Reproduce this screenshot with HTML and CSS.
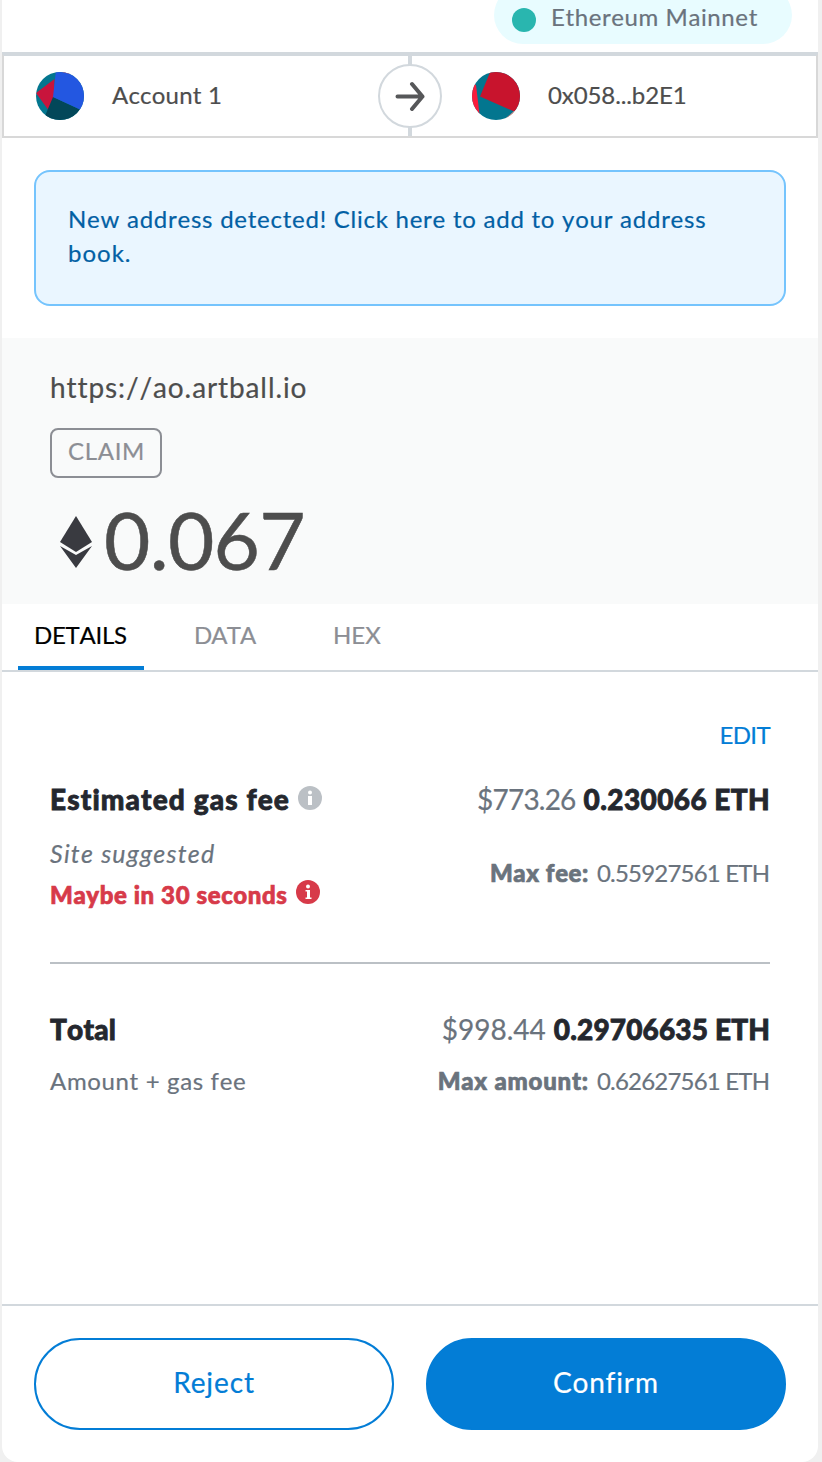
FILE: index.html
```html
<!DOCTYPE html>
<html lang="en">
<head>
<meta charset="utf-8">
<title>Confirm transaction</title>
<link rel="stylesheet" href="styles.css">
</head>
<body>
<main class="panel">
  <header class="header">
    <div class="network"><span class="network-dot"></span><span class="network-name">Ethereum Mainnet</span></div>
  </header>
  <section class="parties">
    <div class="party sender">
      <svg class="avatar" viewBox="0 0 48 48"><defs><clipPath id="disc"><circle cx="24" cy="24" r="24"/></clipPath></defs><g clip-path="url(#disc)"><path fill="#03768f" d="M0 0h48v48H0z"/><path fill="#c8143c" d="M0 21 18.500 7 18 25 12 37.500z"/><path fill="#024759" d="M17 25 44 37.500 38 48H0L9 44z"/><path fill="#2357e1" d="M20-2h30v43L44 37.500 17 25z"/><path fill="#e03850" d="M26 0h8v2z"/></g></svg>
      <span class="party-name sender-name">Account 1</span>
    </div>
    <div class="divider">
      <div class="arrow"><svg width="30" height="30" viewBox="0 0 30 30"><path d="M2.500 15.500h25M17 3l10.500 12.500L17 28" fill="none" stroke="#565759" stroke-width="4" stroke-linecap="round" stroke-linejoin="round"/></svg></div>
    </div>
    <div class="party recipient">
      <svg class="avatar" viewBox="0 0 48 48"><g clip-path="url(#disc)"><path fill="#03768f" d="M0 0h48v48H0z"/><path fill="#fa1c3c" d="M0 10 4 13 7.500 42H0z"/><path fill="#c8142d" d="M19-2h31v44L41 39 8 24.500z"/><path fill="#f98078" d="M32 48 42 39l4 9z"/></g></svg>
      <span class="party-name recipient-name">0x058...b2E1</span>
    </div>
  </section>
  <div class="alert"><span class="alert-text">New address detected! Click here to add to your address</span><br><span class="alert-end">book.</span></div>
  <section class="summary">
    <div class="origin">https://ao.artball.io</div>
    <div class="action">CLAIM</div>
    <div class="amount">
      <svg class="eth" viewBox="0 0 32 52"><path fill="#393a40" d="M16 0 32 26 16 36 0 26z"/><path fill="#393a40" d="M0 30l16 9 16-9L16 52z"/></svg>
      <span class="amount-value">0.067</span>
    </div>
  </section>
  <nav class="tabs">
    <div class="tab tab-active">DETAILS</div>
    <div class="tab tab-data">DATA</div>
    <div class="tab tab-hex">HEX</div>
  </nav>
  <section class="details">
    <div class="edit">EDIT</div>
    <div class="line fee-line">
      <div class="line-title"><span class="fee-title">Estimated gas fee</span><svg class="info info-gray" viewBox="0 0 24 24"><circle cx="12" cy="12" r="12" fill="#bbc0c5"/><circle cx="12" cy="6.500" r="2" fill="#fff"/><path fill="#fff" d="M10 10h4v9h-4z"/></svg></div>
      <div class="line-values"><span class="fiat fee-fiat">$773.26</span><b class="crypto fee-crypto">0.230066 ETH</b></div>
    </div>
    <div class="subline fee-sub">
      <div>
        <div class="suggested">Site suggested</div>
        <div class="timing"><span class="timing-text">Maybe in 30 seconds</span><svg class="info info-red" viewBox="0 0 24 24"><circle cx="12" cy="12" r="12" fill="#d73a49"/><circle cx="12" cy="6.500" r="2" fill="#fff"/><path fill="#fff" d="M9.500 10H14v7.500h1.500v1.500h-6v-1.500H11v-6H9.500z"/></svg></div>
      </div>
      <div class="max max-fee"><b class="max-fee-label">Max fee:</b><span class="max-value">0.55927561 ETH</span></div>
    </div>
    <div class="rule"></div>
    <div class="line total-line">
      <div class="line-title"><span class="total-title">Total</span></div>
      <div class="line-values"><span class="fiat total-fiat">$998.44</span><b class="crypto total-crypto">0.29706635 ETH</b></div>
    </div>
    <div class="subline total-sub">
      <div class="total-note">Amount + gas fee</div>
      <div class="max"><b class="max-amount-label">Max amount:</b><span class="max-value">0.62627561 ETH</span></div>
    </div>
  </section>
  <footer class="footer">
    <button class="button reject">Reject</button>
    <button class="button confirm">Confirm</button>
  </footer>
</main>
</body>
</html>
```
FILE: styles.css
```css
* { box-sizing: border-box; }
body {
  margin: 0;
  background: #f0f0f0;
  font-family: Lato, "Open Sans", sans-serif;
  font-size: 24px;
  line-height: 34px;
  color: #4d4d4d;
  white-space: nowrap;
  font-kerning: none;
  font-variant-ligatures: none;
  -webkit-text-stroke: 0.2px currentColor;
}
svg { display: block; flex: none; }
.panel {
  display: flex;
  flex-direction: column;
  width: 816px;
  height: 1462px;
  margin-left: 2px;
  background: #fff;
  border-radius: 0 0 16px 16px;
  overflow: hidden;
}
.header {
  display: flex;
  justify-content: flex-end;
  height: 54px;
  padding-right: 26px;
  border-bottom: 2px solid #d2d8dd;
}
.network {
  display: flex;
  align-items: center;
  width: 298px;
  height: 58px;
  margin-top: -14px;
  padding: 10px 0 0 18px;
  border-radius: 29px;
  background: #e8fcff;
  color: #6a737d;
}
.network-dot { width: 24px; height: 24px; margin-right: 15px; border-radius: 50%; background: #29b6af; }
.network-name { margin-top: -6px; letter-spacing: 0.6px; }
.parties {
  display: flex;
  height: 84px;
  border: 2px solid #d8d8d8;
  border-top-color: #d2d8dd;
}
.party { display: flex; align-items: center; }
.party-name { margin-top: -2px; }
.sender-name { letter-spacing: 0.2px; }
.recipient-name { letter-spacing: -0.1px; }
.sender { width: 374px; padding-left: 32px; }
.recipient { padding-left: 30px; }
.avatar { width: 48px; height: 48px; margin-right: 28px; }
.divider {
  display: flex;
  align-items: center;
  justify-content: center;
  width: 64px;
  background: linear-gradient(#d2d8dd, #d2d8dd) center / 4px 100% no-repeat;
}
.arrow {
  display: flex;
  align-items: center;
  justify-content: center;
  width: 64px;
  height: 64px;
  border: 2px solid #d2d8dd;
  border-radius: 50%;
  background: #fff;
}
.alert {
  height: 136px;
  margin: 32px 32px;
  padding: 30px 32px;
  border: 2px solid #75c4fd;
  border-radius: 16px;
  background: #eaf6ff;
  color: #0260a4;
}
.alert-text { letter-spacing: 0.75px; }
.alert-end { letter-spacing: 1px; }
.summary { height: 266px; padding: 31px 48px; background: #f9fafa; }
.origin { height: 36px; font-size: 28px; line-height: 36px; letter-spacing: 0.9px; }
.action {
  width: 112px;
  height: 50px;
  margin-top: 23px;
  padding-left: 16px;
  line-height: 42px;
  letter-spacing: 0.7px;
  border: 2px solid #8c8e94;
  border-radius: 8px;
  color: #8c8e94;
}
.amount { display: flex; align-items: center; height: 96px; margin-top: 14px; padding-left: 10px; }
.eth { width: 32px; height: 52px; margin: 4px 12px 0 0; }
.amount-value { font-size: 80px; line-height: 96px; margin-top: -2px; letter-spacing: -0.7px; -webkit-text-stroke-width: 0.5px; }
.tabs { display: flex; height: 68px; padding-left: 16px; border-bottom: 2px solid #d2d8dd; color: #8c8e94; }
.tab { height: 66px; padding: 14px 16px 0; }
.tab-active { width: 126px; border-bottom: 4px solid #037dd6; color: #000; letter-spacing: -0.25px; }
.tab-data { width: 96px; margin-left: 34px; letter-spacing: -0.9px; }
.tab-hex { margin-left: 43px; }
.details { flex: 1; padding: 46px 48px 0; color: #6a737d; }
.edit { text-align: right; color: #037dd6; letter-spacing: -0.6px; }
.line, .subline { display: flex; justify-content: space-between; }
.line { font-size: 28px; line-height: 36px; color: #24292e; }
.fee-line { margin-top: 29px; }
.line-title { display: flex; font-weight: 900; color: #24272e; -webkit-text-stroke-width: 0.8px; }
.fee-title { letter-spacing: 1.12px; }
.total-title { letter-spacing: 0.2px; }
.line-values { display: flex; gap: 8px; }
.fiat { color: #6a737d; }
.fee-fiat { letter-spacing: -0.8px; }
.crypto { font-weight: 900; color: #24272e; -webkit-text-stroke-width: 0.8px; }
.fee-crypto { letter-spacing: 0.4px; }
.total-crypto { letter-spacing: 0.15px; }
.info { width: 24px; height: 24px; }
.info-gray { margin: 5px 0 0 8px; }
.info-red { margin: 2px 0 0 8px; }
.fee-sub { margin-top: 19px; height: 126px; }
.suggested { font-size: 25px; font-style: italic; letter-spacing: 1.2px; }
.timing { display: flex; margin-top: 8px; font-weight: 900; color: #d73a49; letter-spacing: 0.6px; -webkit-text-stroke-width: 0.7px; }
.max { display: flex; gap: 8px; }
.max b { font-weight: 900; -webkit-text-stroke-width: 0.7px; }
.max-fee-label { letter-spacing: 0.6px; }
.max-amount-label { letter-spacing: 0.8px; }
.max-value { margin-right: 0.8px; letter-spacing: -0.8px; }
.max-fee { margin-top: 20px; }
.rule { height: 2px; background: #bbc0c5; }
.total-line { margin-top: 47px; }
.total-sub { margin-top: 17px; }
.total-note { letter-spacing: 0.65px; }
.footer {
  display: flex;
  gap: 32px;
  height: 158px;
  padding: 32px;
  border-top: 2px solid #d2d8dd;
}
.button {
  flex: 1;
  height: 92px;
  padding: 0 0 5px;
  border: 2px solid #037dd6;
  border-radius: 46px;
  font: 28px/36px Lato, "Open Sans", sans-serif;
  letter-spacing: 0.9px;
}
.reject { background: #fff; color: #037dd6; }
.confirm { background: #037dd6; color: #fff; }
```
